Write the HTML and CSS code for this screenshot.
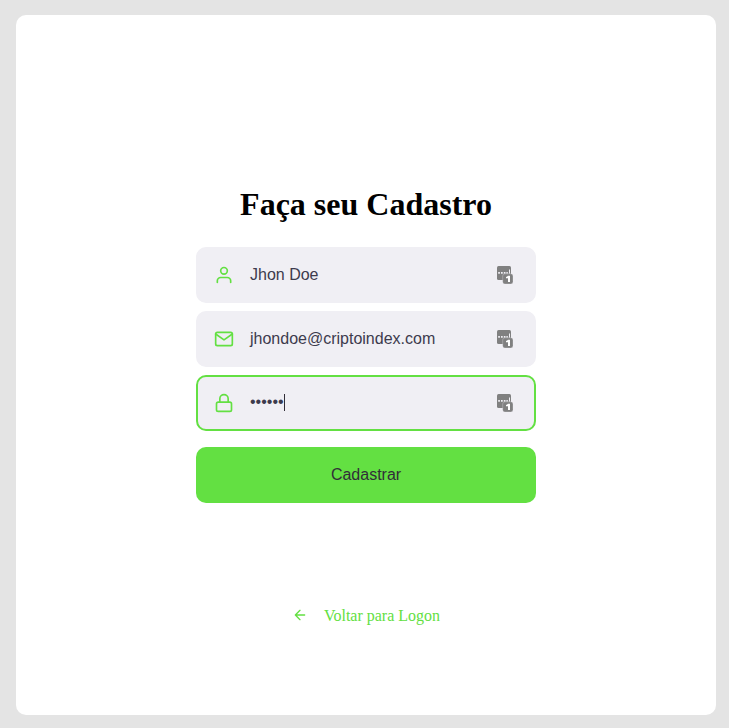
FILE: index.html
```html
<!DOCTYPE html>
<html lang="pt-BR">
<head>
<meta charset="utf-8">
<title>Faça seu Cadastro</title>
<link rel="stylesheet" href="styles.css">
</head>
<body>
<svg width="0" height="0" class="defs"><symbol id="manager" viewBox="0 0 16 18"><rect width="14" height="14" rx="1.500" fill="#808080"/><path fill="#f0eff4" d="M1.200 6h1.700v1.800H1.200zM4 6h1.700v1.800H4zM6.800 6h1.700v1.800H6.800zM9.400 6h1.400v1.800H9.400zM12 3.500h1v4.300h-1z"/><rect x="5.700" y="7.800" width="10.300" height="10.200" rx="2.200" fill="#808080" stroke="#f0eff4" stroke-width=".3"/><path fill="#fff" d="M10.900 9.800H13V16h-2v-3.800H9v-1.300q1.500 0 1.900-1.100z"/></symbol></svg>
<main class="card">
  <form class="form">
    <h1 class="title">Faça seu Cadastro</h1>
    <div class="field">
      <svg class="icon" viewBox="0 0 24 24"><path d="M20 21v-2a4 4 0 0 0-4-4H8a4 4 0 0 0-4 4v2"/><circle cx="12" cy="7" r="4"/></svg>
      <span class="value">Jhon Doe</span>
      <svg class="manager"><use href="#manager"/></svg>
    </div>
    <div class="field">
      <svg class="icon" viewBox="0 0 24 24"><path d="M4 4h16c1.100 0 2 .9 2 2v12c0 1.100-.9 2-2 2H4c-1.100 0-2-.9-2-2V6c0-1.100.9-2 2-2z"/><path d="m22 6-10 7L2 6"/></svg>
      <span class="value">jhondoe@criptoindex.com</span>
      <svg class="manager"><use href="#manager"/></svg>
    </div>
    <div class="field focused">
      <svg class="icon" viewBox="0 0 24 24"><rect x="3" y="11" width="18" height="11" rx="2"/><path d="M7 11V7a5 5 0 0 1 10 0v4"/></svg>
      <span class="value"><span class="dots">••••••</span><i class="caret"></i></span>
      <svg class="manager"><use href="#manager"/></svg>
    </div>
    <button class="submit" type="button">Cadastrar</button>
  </form>
  <a class="back"><svg class="arrow" viewBox="0 0 24 24"><path d="M19 12H5M12 19l-7-7 7-7"/></svg>Voltar para Logon</a>
</main>
</body>
</html>
```
FILE: styles.css
```css
* { box-sizing: border-box; }
body { margin: 0; height: 728px; padding: 15px 13px 13px 16px; background: #e4e4e4; }
.defs { position: absolute; }
.card { height: 700px; padding-top: 171px; background: #fff; border-radius: 10px; display: flex; flex-direction: column; align-items: center; font-family: "Liberation Serif", serif; }
.form { width: 340px; display: flex; flex-direction: column; }
.title { margin: 0 0 24px; height: 37px; line-height: 37px; font-size: 32px; text-align: center; white-space: nowrap; }
.field { display: flex; align-items: center; height: 56px; margin-bottom: 8px; padding: 0 21px 0 16px; border: 2px solid #f0eff4; border-radius: 10px; background: #f0eff4; }
.focused { border-color: #63e042; }
.icon { width: 20px; height: 20px; margin-right: 16px; fill: none; stroke: #63e042; stroke-width: 2; stroke-linecap: round; stroke-linejoin: round; }
.value { flex: 1; display: flex; align-items: center; height: 18px; font: 16px "Liberation Sans", sans-serif; color: #3d3b4d; }
.dots { margin-bottom: 2px; }
.caret { width: 1px; height: 17px; margin-top: -1px; background: #312e38; }
.manager { width: 16px; height: 18px; }
.submit { height: 56px; margin-top: 8px; border: 0; border-radius: 10px; background: #63e042; color: #312e38; font: 16px "Liberation Sans", sans-serif; }
.back { display: flex; align-items: center; margin-top: 104px; font-size: 16px; color: #63e042; }
.arrow { width: 16px; height: 16px; margin: 0 16px 2px 0; fill: none; stroke: #63e042; stroke-width: 2; stroke-linecap: round; stroke-linejoin: round; }
```
